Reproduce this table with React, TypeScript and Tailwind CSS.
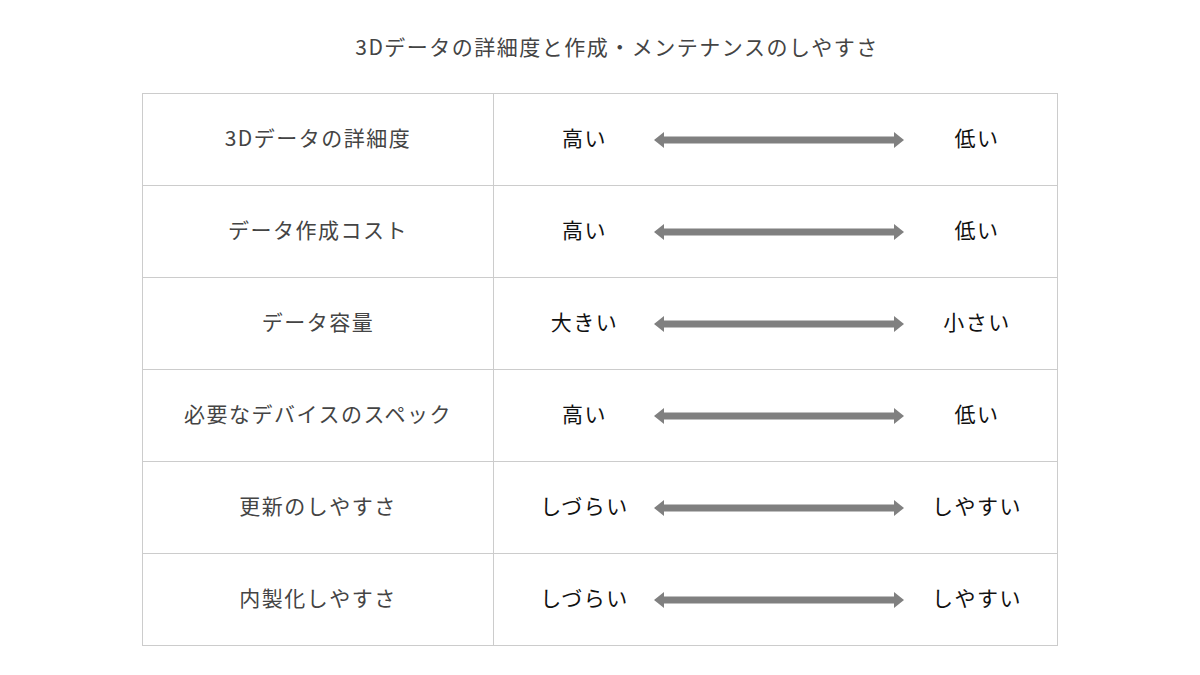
import React from 'react';

const rows = [
  { label: '3Dデータの詳細度', left: '高い', right: '低い' },
  { label: 'データ作成コスト', left: '高い', right: '低い' },
  { label: 'データ容量', left: '大きい', right: '小さい' },
  { label: '必要なデバイスのスペック', left: '高い', right: '低い' },
  { label: '更新のしやすさ', left: 'しづらい', right: 'しやすい' },
  { label: '内製化しやすさ', left: 'しづらい', right: 'しやすい' },
];

// Double-headed arrow between the two ends of a scale
const Arrow: React.FC = () => (
  <svg width="250" height="20" viewBox="0 0 250 20" className="shrink-0">
    <polygon points="0,10 10,2 10,6.5 240,6.5 240,2 250,10 240,18 240,13.5 10,13.5 10,18" fill="#808080" />
  </svg>
);

const App: React.FC = () => {
  return (
    <div
      className="w-[1200px] h-[675px] bg-white flex flex-col items-center"
      style={{ fontFamily: '"Noto Sans CJK JP", "Noto Sans", sans-serif' }}
    >
      <h1 className="mt-[31px] ml-[34px] h-[30px] text-[21px] leading-[30px] tracking-[1.5px] text-[#444] font-normal">
        3Dデータの詳細度と作成・メンテナンスのしやすさ
      </h1>

      <div className="mt-[32px] w-[916px] border border-[#cccccc]">
        {rows.map((row, i) => (
          <div
            key={i}
            className={`flex ${i > 0 ? 'h-[92px] border-t border-[#cccccc]' : 'h-[91px]'}`}
          >
            <div className="w-[351px] shrink-0 flex items-center justify-center border-r border-[#cccccc] pb-[3px] text-[21px] tracking-[1.5px] text-[#444]">
              {row.label}
            </div>
            <div className="flex-1 flex items-center pl-[21px] text-[21px] tracking-[1.5px] text-[#111]">
              <div className="w-[139px] text-center pb-[3px]">{row.left}</div>
              <Arrow />
              <div className="w-[146px] text-center pb-[3px]">{row.right}</div>
            </div>
          </div>
        ))}
      </div>
    </div>
  );
};

export default App;
